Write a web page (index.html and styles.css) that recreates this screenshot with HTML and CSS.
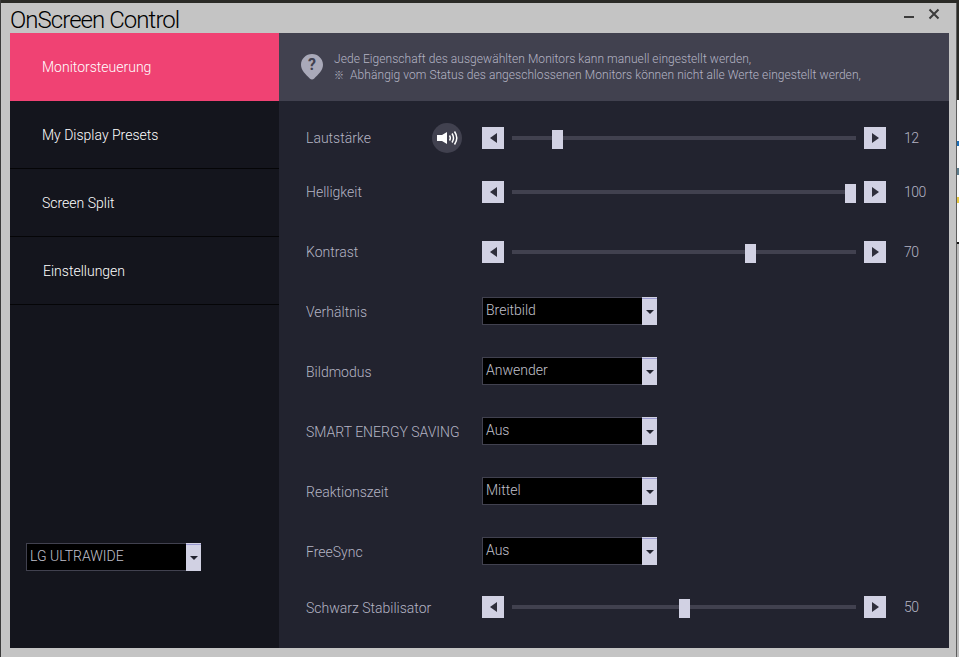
FILE: index.html
```html
<!DOCTYPE html>
<html lang="de">
<head>
<meta charset="utf-8">
<title>OnScreen Control</title>
<link rel="stylesheet" href="styles.css">
</head>
<body>
<div class="desktop">
  <div class="window">
    <header class="titlebar">
      <h1 class="title">OnScreen Control</h1>
      <div class="controls">
        <span class="minimize"></span>
        <svg class="close" width="14" height="14" viewBox="0 0 14 14"><path d="M2.500 2.500l9 9M11.500 2.500l-9 9" stroke="#3c3c3c" stroke-width="2" fill="none"/></svg>
      </div>
    </header>
    <div class="body">
      <nav class="sidebar">
        <a class="nav active">Monitorsteuerung</a>
        <a class="nav">My Display Presets</a>
        <a class="nav">Screen Split</a>
        <a class="nav nudge">Einstellungen</a>
        <div class="monitor">
          <div class="select small"><span class="value">LG ULTRAWIDE</span><span class="drop"><i></i></span></div>
        </div>
      </nav>
      <main class="main">
        <div class="info">
          <svg class="help" width="22" height="26" viewBox="0 0 22 26"><path d="M11 0C5 0 0 4.800 0 10.800c0 5.600 4.600 9.400 9 14 1 1 3 1 4 0 4.400-4.600 9-8.400 9-14C22 4.800 17 0 11 0z" fill="#a9a9b9"/><text x="11" y="16" text-anchor="middle" class="qmark">?</text></svg>
          <div class="info-text">
            <p>Jede Eigenschaft des ausgewählten Monitors kann manuell eingestellt werden,</p>
            <p><span class="mark">※</span> Abhängig vom Status des angeschlossenen Monitors können nicht alle Werte eingestellt werden,</p>
          </div>
        </div>
        <div class="rows">
          <div class="row r-first">
            <span class="label">Lautstärke</span>
            <span class="speaker"><svg width="22" height="16" viewBox="0 0 22 16"><path d="M1 5h5l5-3v12l-5-3H1z" fill="#fff"/><path d="M13.500 5.500c1 1.600 1 3.400 0 5M16 3.500c1.900 2.800 1.900 6.200 0 9M18.500 1.500c2.800 4 2.800 9 0 13" stroke="#fff" stroke-width="1.500" fill="none"/></svg></span>
            <div class="slider"><span class="step"><i class="tri left"></i></span><div class="track"><div class="range"><span class="thumb" style="left:12%"></span></div></div><span class="step"><i class="tri right"></i></span></div>
            <span class="num">12</span>
          </div>
          <div class="row r-tight">
            <span class="label">Helligkeit</span>
            <div class="slider"><span class="step"><i class="tri left"></i></span><div class="track"><div class="range"><span class="thumb" style="left:100%"></span></div></div><span class="step"><i class="tri right"></i></span></div>
            <span class="num">100</span>
          </div>
          <div class="row r-contrast">
            <span class="label">Kontrast</span>
            <div class="slider"><span class="step"><i class="tri left"></i></span><div class="track"><div class="range"><span class="thumb" style="left:70%"></span></div></div><span class="step"><i class="tri right"></i></span></div>
            <span class="num">70</span>
          </div>
          <div class="row">
            <span class="label low">Verhältnis</span>
            <div class="select"><span class="value">Breitbild</span><span class="drop"><i></i></span></div>
          </div>
          <div class="row">
            <span class="label low">Bildmodus</span>
            <div class="select"><span class="value">Anwender</span><span class="drop"><i></i></span></div>
          </div>
          <div class="row">
            <span class="label low">SMART ENERGY SAVING</span>
            <div class="select"><span class="value">Aus</span><span class="drop"><i></i></span></div>
          </div>
          <div class="row">
            <span class="label low">Reaktionszeit</span>
            <div class="select"><span class="value">Mittel</span><span class="drop"><i></i></span></div>
          </div>
          <div class="row">
            <span class="label low">FreeSync</span>
            <div class="select"><span class="value">Aus</span><span class="drop"><i></i></span></div>
          </div>
          <div class="row r-last">
            <span class="label low">Schwarz Stabilisator</span>
            <div class="slider"><span class="step"><i class="tri left"></i></span><div class="track"><div class="range"><span class="thumb" style="left:50%"></span></div></div><span class="step"><i class="tri right"></i></span></div>
            <span class="num">50</span>
          </div>
        </div>
      </main>
    </div>
  </div>
</div>
</body>
</html>
```

FILE: styles.css
```css
* { box-sizing: border-box; }
html, body { margin: 0; height: 100%; overflow: hidden; }
body { background: #fff; font-family: Roboto, "Liberation Sans", sans-serif; font-weight: 300; }
.desktop {
  width: 959px; height: 657px; padding: 3px 2px 0 1px;
  background:
    linear-gradient(to right, #3a3a3a 1px, transparent 1px),
    linear-gradient(#2a2a26 100px, #fafafa 100px, #fafafa 141px, #1c6fb8 141px, #1c6fb8 146px, #fafafa 146px, #fafafa 168px, #5f7f8f 168px, #5f7f8f 175px, #fafafa 175px, #fafafa 197px, #e8c840 197px, #e8c840 203px, #fafafa 203px, #fafafa 242px, #151515 242px, #151515 244px, #bdbdbd 244px);
}
.window { height: 654px; border-left: 1px solid #c6c6c6; border-right: 1px solid #5c5c5c; background: #c4c4c4; padding: 0 7px 9px 8px; display: flex; flex-direction: column; }
.titlebar { height: 30px; flex: none; display: flex; justify-content: space-between; align-items: flex-start; }
.title { margin: 3px 0 0; font-size: 24px; line-height: 28px; font-weight: 300; color: #000; letter-spacing: -0.95px; }
.controls { display: flex; align-items: center; gap: 13px; margin: 4px 8px 0 0; height: 14px; }
.minimize { width: 10px; height: 2px; background: #3c3c3c; margin-top: 6px; }
.close { display: block; }
.body { flex: 1; display: flex; min-height: 0; }
.sidebar { width: 269px; flex: none; background: #14151d; display: flex; flex-direction: column; }
.nav { height: 68px; flex: none; display: flex; align-items: center; padding-left: 32px; color: #fff; font-size: 14px; font-weight: 300; border-bottom: 1px solid #050507; }
.nav.active { background: #f04273; border-bottom: 0; }
.nav.nudge { padding-left: 33px; }
.monitor { margin-top: auto; padding: 0 0 77px 16px; }
.main { flex: 1; background: #22232f; display: flex; flex-direction: column; min-width: 0; }
.info { height: 68px; flex: none; background: #41414f; display: flex; align-items: center; padding: 0 0 4px 22px; gap: 11px; }
.help { flex: none; margin-top: 4px; }
.qmark { font-size: 16px; font-weight: 700; fill: #41414f; font-family: Roboto, sans-serif; }
.info-text { color: #b4b4c4; font-size: 12px; line-height: 15px; margin-top: 4px; letter-spacing: 0.06px; }
.info-text p { margin: 0; white-space: nowrap; }
.mark { font-family: "Noto Sans CJK JP", sans-serif; font-size: 10px; margin-right: 3px; }
.rows { display: flex; flex-direction: column; padding: 7px 0 0 27px; }
.row { height: 60px; flex: none; display: flex; align-items: center; position: relative; padding-left: 176px; }
.r-tight { height: 48px; }
.r-contrast { height: 59px; margin-top: 6px; }
.r-last { height: 52px; }
.label { position: absolute; left: 0; top: 50%; transform: translateY(-50%); color: #b4b4c4; font-size: 14px; white-space: nowrap; }
.label.low { top: calc(50% + 1px); }
.speaker { position: absolute; left: 126px; top: 15px; width: 30px; height: 30px; border-radius: 50%; background: #41414f; display: flex; align-items: center; justify-content: center; }
.speaker svg { display: block; }
.slider { width: 404px; display: flex; align-items: center; }
.step { width: 22px; height: 22px; flex: none; background: #d1d1e3; display: flex; align-items: center; justify-content: center; }
.tri { width: 0; height: 0; border-top: 5px solid transparent; border-bottom: 5px solid transparent; }
.tri.left { border-right: 7px solid #2e2e3a; }
.tri.right { border-left: 7px solid #2e2e3a; }
.track { flex: 1; height: 4px; margin: 0 8px; background: #41414f; position: relative; }
.range { position: absolute; left: 6px; right: 6px; top: 0; bottom: 0; }
.thumb { position: absolute; top: -6px; width: 11px; height: 19px; margin-left: -5.5px; background: #d1d1e3; }
.num { margin-left: 18px; color: #b4b4c4; font-size: 14px; letter-spacing: -0.5px; }
.select { width: 175px; height: 28px; display: flex; background: #000; border: 1px solid #41414f; border-right: 0; }
.select.small { width: 175px; }
.value { flex: 1; color: #c0c0cc; font-size: 14px; font-weight: 300; line-height: 24px; padding-left: 3px; }
.drop { width: 15px; flex: none; margin: -1px 0; background: #d1d1e3; border-top: 1px solid #d1d1e3; box-shadow: inset 0 2px 0 -1px #9a9ad0; display: flex; align-items: center; justify-content: center; }
.drop i { width: 0; height: 0; border-left: 4px solid transparent; border-right: 4px solid transparent; border-top: 4px solid #22232f; }
```
